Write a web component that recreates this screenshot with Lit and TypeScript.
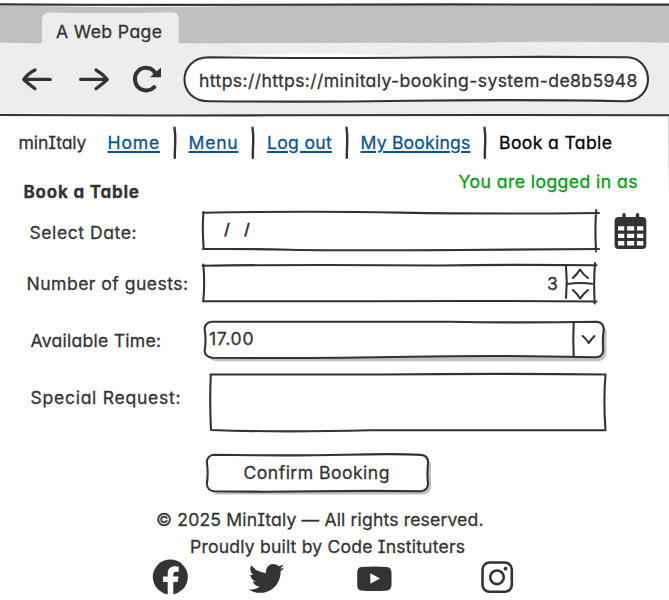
import { LitElement, html, css, svg } from "lit";
import { customElement, property, query } from "lit/decorators.js";

/* One line of text whose letter spacing is adjusted to fill a given width. */
@customElement("fit-text")
class FitText extends LitElement {
  static styles = css`
    :host {
      display: block;
      flex: none;
      height: 20px;
      line-height: 20px;
      white-space: pre;
      -webkit-text-stroke: 0.28px currentColor;
    }
    .line {
      display: inline-block;
    }
    :host([link]) {
      color: #0b5394;
    }
    :host([link]) .line {
      text-decoration: underline;
      text-decoration-thickness: 1.5px;
      text-underline-offset: 1.5px;
    }
  `;
  @property({ type: Number }) width = 0;
  @property() text = "";
  @property({ type: Boolean, reflect: true }) link = false;
  @query(".line") line!: HTMLElement;

  updated() {
    this.style.width = `${this.width}px`;
    this.line.style.letterSpacing = "0px";
    const natural = this.line.getBoundingClientRect().width;
    const gaps = Math.max(1, this.text.length - (this.link ? 0 : 1));
    this.line.style.letterSpacing = `${(this.width - natural) / gaps}px`;
  }

  render() {
    return html`<span class="line">${this.text}</span>`;
  }
}

const t = (text: string, width: number, cls = "") =>
  html`<fit-text class=${cls} .text=${text} .width=${width}></fit-text>`;
const link = (text: string, width: number, cls: string) =>
  html`<fit-text link class=${cls} .text=${text} .width=${width}></fit-text>`;

@customElement("app-root")
class AppRoot extends LitElement {
  static styles = css`
    :host {
      display: block;
      width: 669px;
      height: 600px;
      overflow: hidden;
      background: #fff;
      color: #333;
      font-family: Inter, "Open Sans", sans-serif;
      font-size: 17.6px;
      font-weight: 400;
      font-feature-settings: "cv11", "cv08", "ss03" 0, "calt" 0;
      position: relative;
    }
    svg {
      display: block;
      flex: none;
      fill: none;
      stroke: #333;
      stroke-width: 2.1;
      stroke-linecap: round;
      stroke-linejoin: round;
    }
    .solid {
      fill: #333;
      stroke: none;
    }
    .white {
      fill: #fff;
      stroke: none;
    }
    .shadow {
      fill: #c0c0c0;
      stroke: none;
    }
    .paper {
      fill: #fff;
    }
    .bar {
      stroke-width: 2.4;
    }
    .arrow {
      stroke-width: 3.2;
    }
    .reload {
      stroke-width: 4;
    }
    .ring {
      stroke-width: 3.5;
    }
    .camera {
      stroke-width: 2.6;
    }
    .stack {
      display: grid;
      flex: none;
    }
    .stack > * {
      grid-area: 1 / 1;
    }
    .browser {
      height: 118px;
    }
    .bars {
      display: flex;
      flex-direction: column;
    }
    .tab {
      height: 22px;
      padding: 22px 0 0 56px;
    }
    .tools {
      display: flex;
      align-items: flex-start;
      height: 72px;
      padding-left: 18px;
    }
    .url {
      padding: 27px 0 0 16px;
    }
    nav {
      display: flex;
      height: 46px;
      padding: 8px 0 0 18.5px;
      box-sizing: border-box;
    }
    nav fit-text {
      margin-top: 7px;
    }
    .home {
      margin-left: 21px;
    }
    .current {
      color: #000;
      margin-left: 9px;
    }
    .item {
      margin-left: 9px;
    }
    nav svg {
      margin-left: 9.5px;
    }
    .heading {
      display: flex;
      justify-content: space-between;
      height: 41px;
      padding: 8px 31.5px 0 23.5px;
      box-sizing: border-box;
    }
    .title {
      margin-top: 10px;
      font-weight: 700;
      font-size: 17px;
    }
    .user {
      color: #009e0f;
    }
    .row {
      display: flex;
    }
    .label {
      width: 200px;
      flex: none;
      box-sizing: border-box;
    }
    .date {
      padding: 18px 0 0 29.5px;
    }
    .guests {
      padding: 17px 0 0 26.5px;
    }
    .time {
      padding: 21px 0 0 30.5px;
    }
    .request {
      padding: 24px 0 0 30.5px;
    }
    .slashes {
      padding: 15px 0 0 24px;
      display: flex;
      gap: 12px;
      font-size: 15.5px;
      font-weight: 600;
    }
    .count {
      padding: 17px 0 0 347px;
    }
    .hour {
      padding: 19px 0 0 9px;
    }
    .action {
      padding-left: 200px;
      height: 60px;
    }
    .confirm {
      padding: 23px 0 0 43.5px;
    }
    footer {
      padding-top: 10px;
    }
    .copyright {
      margin-left: 156px;
    }
    .credit {
      margin: 7px 0 0 190px;
    }
    .social {
      display: flex;
      gap: 56px;
      padding-left: 150px;
    }
    .video {
      margin-left: 12px;
    }
    .photo {
      margin-left: 28px;
    }
    .edge {
      position: absolute;
      right: 0;
      top: 117px;
      width: 1px;
      height: 88px;
      background: linear-gradient(#c8c8c8, #fff);
    }
  `;

  chrome() {
    return svg`<svg width="669" height="118" viewBox="0 0 669 118">
      <path fill="#c0c0c0" stroke="none" d="M0 5H669V43.500H0z" />
      <path fill="#ededed" stroke="none" d="M0 42.500Q22 43 42 44.500V19Q43 12.500 49 12.500Q110 13.800 172 12.200Q178.500 12.500 178.800 18V44.500Q300 42 460 43Q550 40.500 669 42.800V115H0z" />
      <path fill="#fff" stroke="none" d="M35 6Q140 8.300 235 6zM210 57Q265 53 335 53.500Q390 55 430 57zM0 113.500Q80 112.500 160 114z" />
      <path d="M-2 4.300Q120 5.200 240 4.800T450 4.400T671 4.600" />
      <path d="M-2 115Q130 115.800 270 115.300T490 115T671 115.300" />
    </svg>`;
  }

  separator() {
    return html`<svg width="10" height="34" viewBox="0 0 10 34">
      <path class="bar" d="M4.500 1.700Q5.600 9 5.200 17T4.800 31.800" />
    </svg>`;
  }

  render() {
    return html`
      <header class="browser stack">
        ${this.chrome()}
        <div class="bars">
          <div class="tab">${t("A Web Page", 106)}</div>
          <div class="tools">
            <svg width="165" height="72" viewBox="18 44 165 72">
              <path class="arrow" d="M35 70Q28 73.500 23.700 79.500Q28.500 84 35 88.700M24 79.400H50.300" />
              <path class="arrow" d="M96 70Q103 74 107.300 79.500Q102.500 84 96 88.700M107 79.400H80.600" />
              <path class="reload" d="M155.500 74C153 66.800 143 66 138.300 70.800C133 76 134.300 85.500 140.500 88.900C145 91.300 150.500 91 154.300 87.200" />
              <path class="solid" d="M161 67.500V77.200H149.800z" />
            </svg>
            <div class="stack">
              <svg width="486" height="72" viewBox="183 44 486 72">
                <path class="paper" d="M209 57.300C192 57.300 184.500 69 184.500 79.500C184.500 91 193 101.200 209 101.200Q310 102.300 410 100.800T624 101.200C640 101.500 648 90 648 79.500C648 67 639 57.200 627 57.200Q520 56.500 425 57.500T209 57.300z" />
              </svg>
              <div class="url">
                ${t("https://https://minitaly-booking-system-de8b5948", 438.5)}
              </div>
            </div>
          </div>
        </div>
      </header>
      <div class="edge"></div>
      <nav>
        ${t("minItaly", 68)} ${link("Home", 52.5, "home")} ${this.separator()}
        ${link("Menu", 50, "item")} ${this.separator()}
        ${link("Log out", 65, "item")} ${this.separator()}
        ${link("My Bookings", 110, "item")} ${this.separator()}
        ${t("Book a Table", 113, "current")}
      </nav>
      <div class="heading">
        ${t("Book a Table", 115.5, "title")}
        ${t("You are logged in as", 179, "user")}
      </div>

      <div class="row">
        <div class="label date">${t("Select Date:", 107)}</div>
        <div class="stack">
          <svg width="410" height="52" viewBox="200 205 410 52">
            <path d="M203 212.700Q310 211 400 212.600T599 213M203.500 212Q202 227 203.700 249M203 249Q245 248.700 290 249.700T460 250T599 249M596.300 210Q594.800 225 596 251.500" />
          </svg>
          <div class="slashes">${t("/", 8)}${t("/", 8)}</div>
        </div>
        <svg width="40" height="52" viewBox="610 205 40 52">
          <rect class="solid" x="614.600" y="217" width="31.700" height="32" rx="4" />
          <path class="ring" d="M624 214.700V220M637.500 214.700V220" />
          <path class="white" d="M618 226.300h6.300v4.200H618zM627 226.300h7.200v4.200H627zM637 226.300h6.300v4.200H637zM618 233.700h6.300v4.200H618zM627 233.700h7.200v4.200H627zM637 233.700h6.300v4.200H637zM618 241h6.300v4.600H618zM627 241h7.200v4.600H627zM637 241h6.300v4.600H637z" />
        </svg>
      </div>

      <div class="row">
        <div class="label guests">${t("Number of guests:", 161.5)}</div>
        <div class="stack">
          <svg width="410" height="53" viewBox="200 257 410 53">
            <path d="M202.500 265.700Q310 264.300 440 265.500Q510 264.400 596.500 265.300M203.300 264.500Q205 282 203.300 301.500M203 301.300H370Q480 300.500 596.500 301.500M595 263Q593.500 282 594.700 303.500" />
            <path d="M566 266.500Q567.500 282 566 298M567 284Q580 282.300 592 283.700" />
            <path d="M572.800 278Q577 274.500 580 269.500Q583.500 275 588 278M572.800 290Q577 293.500 580.300 298.300Q583.500 293.500 588 290" />
          </svg>
          <div class="count">${t("3", 12)}</div>
        </div>
      </div>

      <div class="row">
        <div class="label time">${t("Available Time:", 130.5)}</div>
        <div class="stack">
          <svg width="410" height="54" viewBox="200 310 410 54">
            <path class="shadow" d="M209 355V357Q211 361 217 361.200H598Q606 361 606.500 352V330L601 325z" />
            <path class="paper" d="M212 321.800H450Q520 323 597 321.700Q603.500 322.500 603.700 329Q602.300 340 603.200 350Q603 356.800 596 357.200Q500 355 410 356.700T212 357.800Q205 356.500 204.600 351Q206.500 340 204.600 329Q205 322.500 212 321.800z" />
            <path d="M573.700 322Q572.900 340 573.700 356.500" />
            <path d="M582.700 336Q586 338.500 588.700 343Q591 339.500 594.500 336" />
          </svg>
          <div class="hour">${t("17.00", 44.5)}</div>
        </div>
      </div>

      <div class="row">
        <div class="label request">${t("Special Request:", 150)}</div>
        <svg width="410" height="76" viewBox="200 364 410 76">
          <path d="M210.500 374.500H380Q500 373.300 605.500 374.500Q603.300 400 605.500 430.300H370Q280 432.500 211 430Q209.500 402 210.800 374.500" />
        </svg>
      </div>

      <div class="action stack">
        <svg width="240" height="60" viewBox="200 440 240 60">
          <path class="shadow" d="M211 490Q213 494.300 218 494.400H423Q430.500 494 431 487V464L426 459z" />
          <path class="paper" d="M214 454.800Q290 456 345 454.700T421 454.900Q427.500 455.500 428.200 462Q426.800 473 428 484Q427.500 490.500 421 491.200Q370 490.500 315 491.300T214 491.200Q207.500 490.500 206.800 484Q208.500 473 206.800 462Q207.500 455.500 214 454.800z" />
        </svg>
        <div class="confirm">${t("Confirm Booking", 146)}</div>
      </div>

      <footer>
        ${t("© 2025 MinItaly — All rights reserved.", 327.5, "copyright")}
        ${t("Proudly built by Code Instituters", 275, "credit")}
        <div class="social">
          <svg width="40" height="43" viewBox="150 557 40 43">
            <circle class="solid" cx="170.300" cy="577" r="17.500" />
            <path class="white" d="M167.700 595V582H163V576.500H167.700V573.500C167.700 568.500 171 566.300 175 566.300L178.700 566.700V571.700H176C174 571.700 173.300 572.800 173.300 574.500V576.500H178.500L177.700 582H173.300V595z" />
          </svg>
          <svg width="40" height="43" viewBox="246 557 40 43">
            <path class="solid" transform="translate(248.800 560.700) scale(.0692)" d="M459.370 151.716c.325 4.548.325 9.097.325 13.645 0 138.720-105.583 298.558-298.558 298.558-59.452 0-114.680-17.219-161.137-47.106 8.447.974 16.568 1.299 25.340 1.299 49.055 0 94.213-16.568 130.274-44.832-46.132-.975-84.792-31.188-98.112-72.772 6.498.974 12.995 1.624 19.818 1.624 9.421 0 18.843-1.300 27.614-3.573-48.081-9.747-84.143-51.980-84.143-102.985v-1.299c13.969 7.797 30.214 12.670 47.431 13.319-28.264-18.843-46.781-51.005-46.781-87.391 0-19.492 5.197-37.360 14.294-52.954 51.655 63.675 129.300 105.258 216.365 109.807-1.624-7.797-2.599-15.918-2.599-24.040 0-57.828 46.782-104.934 104.934-104.934 30.213 0 57.502 12.670 76.670 33.137 23.715-4.548 46.456-13.320 66.599-25.340-7.798 24.366-24.366 44.833-46.132 57.827 21.117-2.273 41.584-8.122 60.426-16.243-14.292 20.791-32.161 39.308-52.628 54.253z" />
          </svg>
          <svg class="video" width="40" height="43" viewBox="354 557 40 43">
            <path class="solid" d="M361 567Q374 565.800 387 567Q391.300 567.500 391.500 573V585Q391.300 590 387 590.500Q374 591.600 361 590.500Q357.300 590 357.200 585V573Q357.300 567.500 361 567z" />
            <path class="white" d="M370.300 573.300L380 578.500L370.300 583.800z" />
          </svg>
          <svg class="photo" width="40" height="43" viewBox="478 557 40 43">
            <rect class="camera" x="482.500" y="562.500" width="29.300" height="29.300" rx="7" />
            <circle class="camera" cx="497" cy="577.300" r="6.800" />
            <circle class="solid" cx="505.500" cy="568.700" r="1.900" />
          </svg>
        </div>
      </footer>
    `;
  }
}
